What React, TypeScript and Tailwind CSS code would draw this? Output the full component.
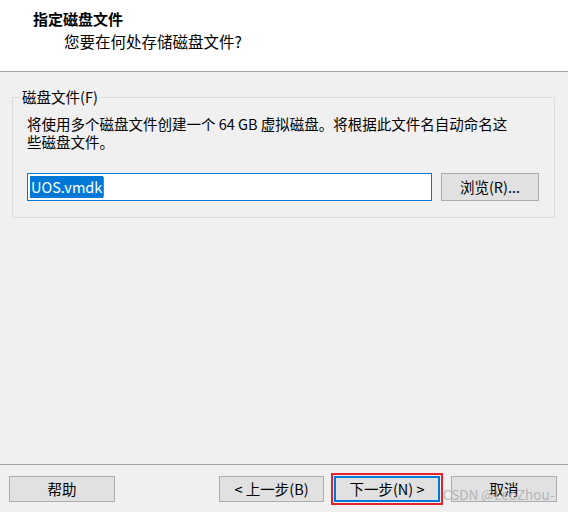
export default function App() {
  const font = { fontFamily: '"Noto Sans CJK SC", "Noto Sans", sans-serif' };

  return (
    <div
      className="relative w-[568px] h-[512px] flex flex-col bg-[#f0f0f0] text-black overflow-hidden"
      style={font}
    >
      {/* Header */}
      <div className="h-[72px] bg-white border-b border-[#a0a0a0] pl-[33px] pt-[9px]">
        <div className="text-[15px] leading-[20px] font-bold">指定磁盘文件</div>
        <div className="ml-[31px] mt-[2px] text-[15.5px] leading-[20px]">您要在何处存储磁盘文件?</div>
      </div>

      {/* Group box */}
      <fieldset className="mt-[17px] ml-[12px] mr-[13px] border border-[#dcdcdc] pl-[14px] pr-[6px] pb-[16px]">
        <legend className="-ml-[7px] px-[2px] text-[14.5px] leading-[16px]">磁盘文件(F)</legend>
        <p className="mt-[10px] w-[490px] text-[14.5px] leading-[18px]">
          将使用多个磁盘文件创建一个 64 GB 虚拟磁盘。将根据此文件名自动命名这些磁盘文件。
        </p>
        <div className="mt-[22px] flex items-center gap-[9px]">
          <div className="w-[405px] h-[28px] bg-white border border-[#0078d7] flex items-center pl-[2px]">
            <span className="bg-[#0078d7] text-white text-[14.5px] leading-[22px] px-[1px]">UOS.vmdk</span>
            <span className="w-px h-[20px] bg-[#c8702a]" />
          </div>
          <button className="w-[98px] h-[28px] bg-[#e1e1e1] border border-[#adadad] text-[14.5px] leading-[20px]">
            浏览(R)...
          </button>
        </div>
      </fieldset>

      {/* Footer */}
      <div className="mt-auto h-[48px] border-t border-[#a0a0a0] flex items-start pt-[11px]">
        <button className="ml-[9px] w-[106px] h-[26px] bg-[#e1e1e1] border border-[#adadad] text-[14.5px] leading-[20px]">
          帮助
        </button>
        <button className="ml-[104px] w-[105px] h-[26px] bg-[#e1e1e1] border border-[#adadad] text-[14.5px] leading-[20px]">
          &lt; 上一步(B)
        </button>
        <button className="ml-[10px] w-[106px] h-[26px] bg-[#e1e1e1] border-2 border-[#0078d7] outline-2 outline-offset-[1px] outline-[#e3222b] text-[14.5px] leading-[20px]">
          下一步(N) &gt;
        </button>
        <button className="ml-[11px] w-[106px] h-[26px] bg-[#e1e1e1] border border-[#adadad] text-[14.5px] leading-[20px]">
          取消
        </button>
      </div>

      {/* Watermark */}
      <div className="absolute left-[443px] top-[485px] text-[13.5px] leading-[18px] text-[#a8a8a8]/80 pointer-events-none">
        CSDN @LeoZhou-
      </div>
    </div>
  );
}
